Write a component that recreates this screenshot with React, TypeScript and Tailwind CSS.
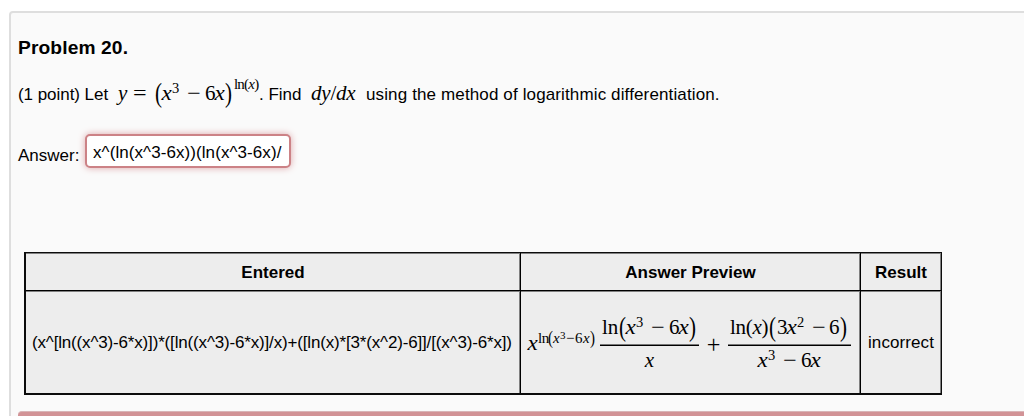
import type { ReactNode } from "react";

/** A piece of a formula set in the math face. */
function Sym({ children, className = "" }: { children: ReactNode; className?: string }) {
  return <span className={`inline-block whitespace-pre ${className}`}>{children}</span>;
}

const math = "font-['Liberation_Serif',serif] text-[21px] leading-[24px]";
const paren = "origin-[50%_58%] scale-y-130";
const sup = "relative -top-[7px] text-[14.5px]";
const cell = "border-black shadow-[inset_-1px_1px_#808080]";
const bar = "border-b border-black shadow-[inset_0_-1px_#777777]";

function Problem() {
  return (
    <p className="mt-[21px] flex h-[24px] items-baseline whitespace-pre text-[17px] leading-[24px]">
      <span className="w-[100px] tracking-[-0.05px]">(1 point) Let</span>
      <span className={`${math} inline-flex w-[141px] items-baseline`}>
        <Sym className="w-[15px] italic">y</Sym>
        <Sym className="w-[22px] origin-left scale-x-115">=</Sym>
        <Sym className={`${paren} w-[7px]`}>(</Sym>
        <Sym className="w-[10px] scale-x-110 italic">x</Sym>
        <Sym className={`${sup} w-[15px]`}>3</Sym>
        <Sym className="w-[18px] origin-left scale-x-115">−</Sym>
        <Sym className="w-[10px]">6</Sym>
        <Sym className="w-[10px] scale-x-110 italic">x</Sym>
        <Sym className={`${paren} w-[9px]`}>)</Sym>
        <Sym className="relative -top-[11px] w-[25px] text-[15px] tracking-[-0.8px]">
          ln(<i>x</i>)
        </Sym>
      </span>
      <span className="w-[52px]">. Find</span>
      <span className={`${math} w-[55px] tracking-[-0.2px]`}>
        <i>dy</i>/<i>dx</i>
      </span>
      <span className="tracking-[0.13px]">using the method of logarithmic differentiation.</span>
    </p>
  );
}

function Preview() {
  return (
    <div className={`${math} flex h-[101px] items-start pl-[7px]`}>
      <Sym className="mt-[40px] w-[10px] scale-x-110 italic">x</Sym>
      <span className="mt-[35px] flex w-[62px] items-baseline text-[15px]">
        <Sym className="w-[10px] tracking-[-0.5px]">ln</Sym>
        <Sym className="w-[5px] origin-[50%_58%] scale-y-130">(</Sym>
        <Sym className="w-[7px] italic">x</Sym>
        <Sym className="relative -top-[4px] w-[6px] text-[11px]">3</Sym>
        <Sym className="w-[9px]">−</Sym>
        <Sym className="w-[8px]">6</Sym>
        <Sym className="w-[7px] italic">x</Sym>
        <Sym className="w-[5px] origin-[50%_58%] scale-y-130">)</Sym>
      </span>
      <span className="mt-[24px] flex w-[99px] flex-col">
        <span className={`${bar} flex h-[31px] items-baseline pl-[2px]`}>
          <Sym className="w-[17px]">ln</Sym>
          <Sym className={`${paren} w-[7px]`}>(</Sym>
          <Sym className="w-[10px] scale-x-110 italic">x</Sym>
          <Sym className={`${sup} w-[15px]`}>3</Sym>
          <Sym className="w-[18px] origin-left scale-x-115">−</Sym>
          <Sym className="w-[10px]">6</Sym>
          <Sym className="w-[10px] scale-x-110 italic">x</Sym>
          <Sym className={`${paren} w-[7px]`}>)</Sym>
        </span>
        <Sym className="mt-[2px] text-center italic">x</Sym>
      </span>
      <Sym className="mt-[42px] w-[29px] scale-115 text-center">+</Sym>
      <span className="mt-[24px] flex w-[123px] flex-col">
        <span className={`${bar} flex h-[31px] items-baseline pl-[2px]`}>
          <Sym className="w-[39px] tracking-[-0.3px]">
            ln(<i>x</i>)
          </Sym>
          <Sym className={`${paren} w-[8px]`}>(</Sym>
          <Sym className="w-[10px]">3</Sym>
          <Sym className="w-[10px] scale-x-110 italic">x</Sym>
          <Sym className={`${sup} w-[15px]`}>2</Sym>
          <Sym className="w-[17px] origin-left scale-x-115">−</Sym>
          <Sym className="w-[11px]">6</Sym>
          <Sym className={`${paren} w-[7px]`}>)</Sym>
        </span>
        <span className="mt-[2px] flex items-baseline pl-[30px]">
          <Sym className="w-[10px] scale-x-110 italic">x</Sym>
          <Sym className={`${sup} w-[15px]`}>3</Sym>
          <Sym className="w-[18px] origin-left scale-x-115">−</Sym>
          <Sym className="w-[10px]">6</Sym>
          <Sym className="w-[10px] scale-x-110 italic">x</Sym>
        </span>
      </span>
    </div>
  );
}

function Results() {
  return (
    <div className="mt-[84px] ml-[6px] grid h-[143px] w-[918px] grid-cols-[495px_340px_80px] grid-rows-[38px_102px] border-t border-r border-b-2 border-l-2 border-[#0c0c0c] bg-[#ededed] text-[17px] leading-[39px]">
      <b className={`${cell} border-r border-b text-center`}>Entered</b>
      <b className={`${cell} border-r border-b text-center`}>Answer Preview</b>
      <b className={`${cell} border-b text-center`}>Result</b>
      <div className={`${cell} flex items-center border-r pl-[6px] tracking-[-0.165px] whitespace-nowrap`}>
        {"(x^[ln((x^3)-6*x)])*([ln((x^3)-6*x)]/x)+([ln(x)*[3*(x^2)-6]]/[(x^3)-6*x])"}
      </div>
      <div className={`${cell} border-r`}>
        <Preview />
      </div>
      <div className={`${cell} flex items-center justify-center tracking-[0.1px]`}>incorrect</div>
    </div>
  );
}

export default function App() {
  return (
    <main className="h-[416px] overflow-hidden bg-white pt-[11px] pl-[9px] font-['Liberation_Sans',sans-serif] text-black">
      <section className="h-[440px] w-[1040px] rounded-tl-[4px] border-2 border-[#dedede] bg-[#fafafa] pt-[23px] pl-[7px]">
        <h1 className="h-[24px] text-[19.2px] leading-[24px] font-bold tracking-[0.12px]">Problem 20.</h1>
        <Problem />
        <label className="mt-[29px] flex h-[34px] items-center text-[17px]">
          <span className="w-[67px] pt-[9px]">Answer:</span>
          <input
            className="h-[34px] w-[206px] rounded-[5px] border-2 border-[#cc8286] bg-white px-[6px] pt-[4px] text-[17px] tracking-[0.08px] shadow-[0_0_7px_#dda5a8] outline-none"
            defaultValue="x^(ln(x^3-6x))(ln(x^3-6x)/"
          />
        </label>
        <Results />
        <div className="mt-[16px] h-[30px] rounded-tl-[4px] border-t border-[#d9b5b7] bg-[#d29396]" />
      </section>
    </main>
  );
}
